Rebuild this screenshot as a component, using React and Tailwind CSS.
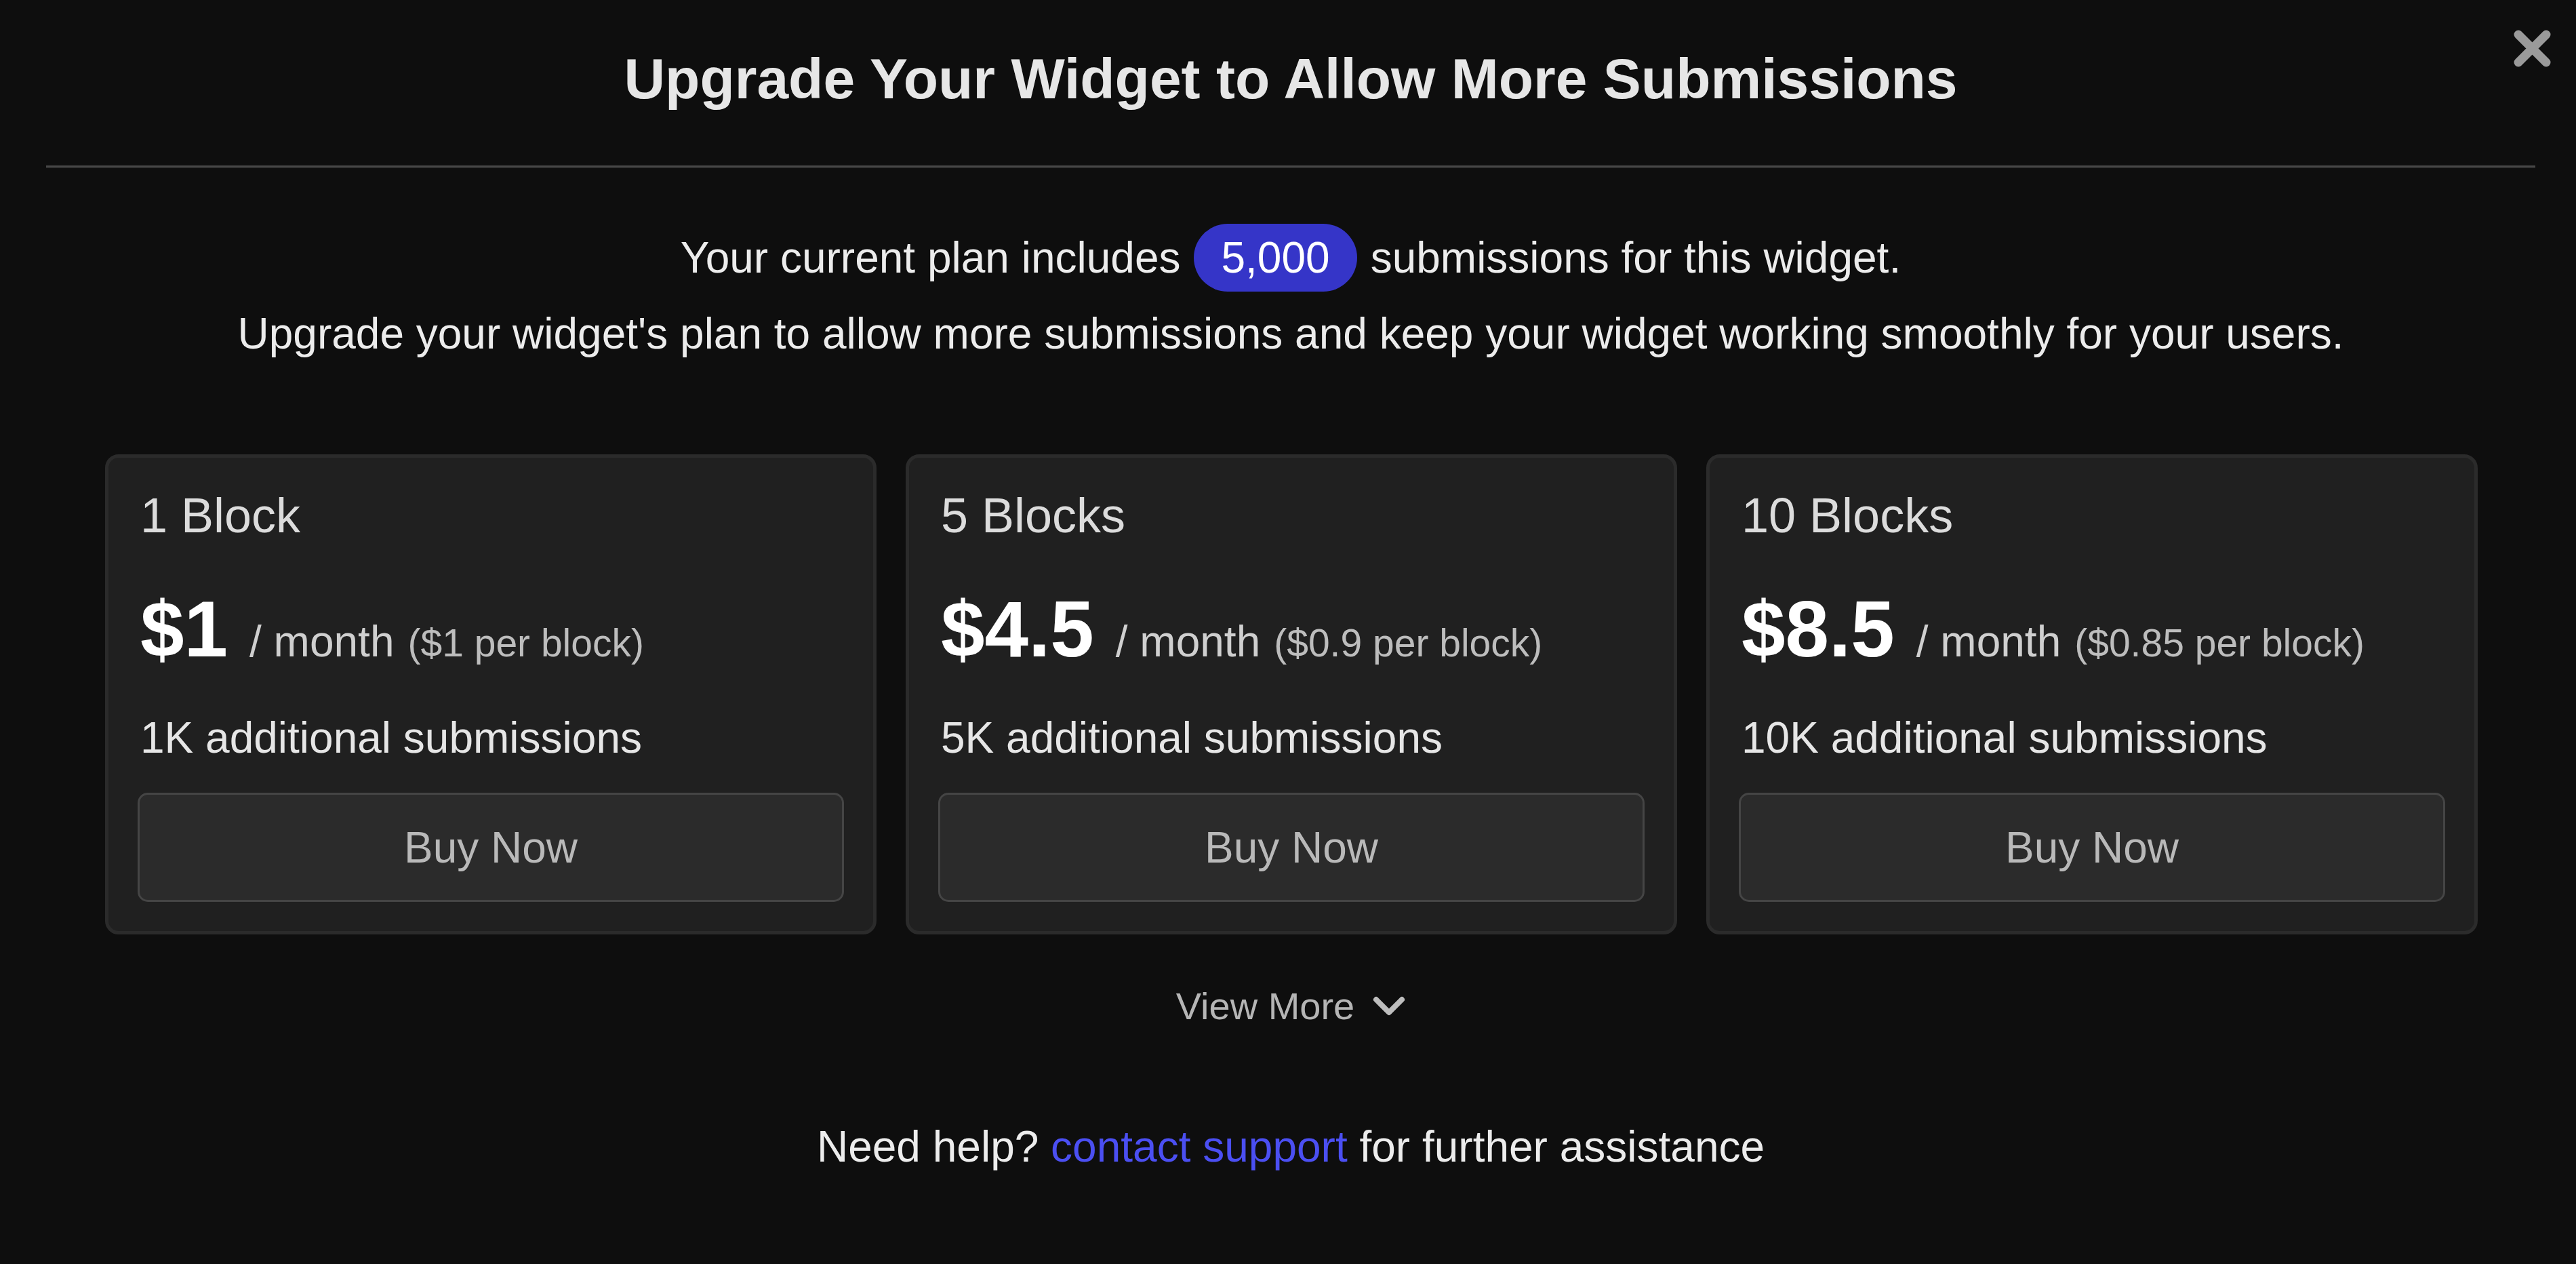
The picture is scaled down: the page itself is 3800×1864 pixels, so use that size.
import React from 'react';

const plans = [
    { name: '1 Block', price: '$1', per: '($1 per block)', subs: '1K additional submissions' },
    { name: '5 Blocks', price: '$4.5', per: '($0.9 per block)', subs: '5K additional submissions' },
    { name: '10 Blocks', price: '$8.5', per: '($0.85 per block)', subs: '10K additional submissions' },
];

const PlanCard = ({ plan }) => {
    return (
        <div className="flex flex-col rounded-[20px] border-[5px] border-[#2b2b2b] bg-[#202020] px-[43px] py-[43px]">
            <div className="pl-[4px] text-[72px] leading-[84px] text-[#dcdcdc]">{plan.name}</div>

            <div className="mt-[70px] flex items-baseline pl-[4px] leading-[112px]">
                <span className="text-[116px] font-bold text-white">{plan.price}</span>
                <span className="ml-[32px] text-[64px] text-[#cfcfcf]">/ month</span>
                <span className="ml-[20px] text-[57px] text-[#bdbdbd]">{plan.per}</span>
            </div>

            <div className="mt-[46px] pl-[4px] text-[64px] leading-[77px] text-[#e6e6e6]">{plan.subs}</div>

            <button className="mt-[42px] flex h-[161px] w-full items-center justify-center rounded-[15px] border-[3px] border-[#454545] bg-[#2b2b2b] text-[64px] text-[#b9b9b9]">
                Buy Now
            </button>
        </div>
    );
};

export default function App() {
    return (
        <div className="relative min-h-[1864px] w-full bg-[#0e0e0e] font-['Liberation_Sans',Arial,sans-serif]">
            {/* close button */}
            <button className="absolute right-[37px] top-[44px] h-[55px] w-[55px]" title="Close">
                <svg viewBox="0 0 55 55" className="h-full w-full">
                    <path d="M7 7 L48 48 M48 7 L7 48" stroke="#9a9a9a" strokeWidth="13" strokeLinecap="round" />
                </svg>
            </button>

            {/* header */}
            <div className="px-[60px]">
                <h1 className="pl-[8px] pt-[66px] pb-[78px] text-center text-[84px] font-bold leading-[100px] text-[#e6e6e6]">
                    Upgrade Your Widget to Allow More Submissions
                </h1>
                <div className="ml-[8px] h-[4px] border-t-[3px] border-[#474747] bg-[#222]" />
            </div>

            <div className="pl-[8px]">
                {/* current plan */}
                <div className="mt-[82px] flex h-[100px] items-center justify-center gap-[20px] text-[64px] text-[#ececec]">
                    <span>Your current plan includes</span>
                    <span className="flex h-[100px] items-center rounded-full bg-[#3535c8] px-[40px] text-white">5,000</span>
                    <span>submissions for this widget.</span>
                </div>
                <p className="mt-[24px] text-center text-[64px] leading-[77px] text-[#ececec]">
                    Upgrade your widget's plan to allow more submissions and keep your widget working smoothly for your users.
                </p>

                {/* plans */}
                <div className="ml-[147px] mt-[139px] grid w-[3500px] grid-cols-3 gap-[43px]">
                    {plans.map((plan) => (
                        <PlanCard key={plan.name} plan={plan} />
                    ))}
                </div>

                {/* view more */}
                <div className="mt-[72px] flex items-center justify-center gap-[27px] text-[56px] leading-[67px] text-[#b5b5b5]">
                    <span>View More</span>
                    <svg width="48" height="30" viewBox="0 0 48 30">
                        <path d="M5 5 L24 24 L43 5" fill="none" stroke="#bdbdbd" strokeWidth="8" strokeLinecap="round" strokeLinejoin="round" />
                    </svg>
                </div>

                {/* help */}
                <p className="mt-[136px] text-center text-[64px] leading-[77px] text-[#ececec]">
                    Need help? <a href="#" className="text-[#4b4ff2]">contact support</a> for further assistance
                </p>
            </div>
        </div>
    );
}
